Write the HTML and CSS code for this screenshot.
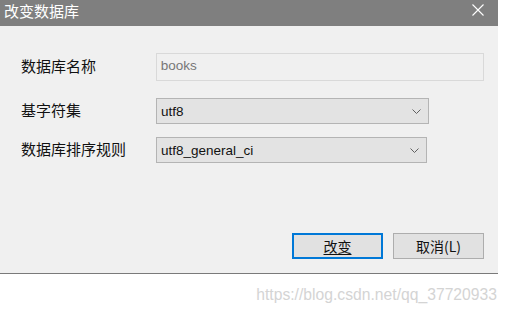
FILE: index.html
```html
<!DOCTYPE html>
<html lang="zh-CN">
<head>
<meta charset="utf-8">
<title>改变数据库</title>
<link rel="stylesheet" href="styles.css">
</head>
<body>
<div class="dialog">
  <div class="titlebar">
    <span class="title">改变数据库</span>
    <svg class="close" width="12" height="12" viewBox="0 0 12 12"><path d="M0.5 0.5 L11.5 11.5 M11.5 0.5 L0.5 11.5" stroke="#ffffff" stroke-width="1.1" fill="none"/></svg>
  </div>
  <div class="content">
    <div class="form">
      <div class="row r1">
        <div class="label">数据库名称</div>
        <div class="input">books</div>
      </div>
      <div class="row r2">
        <div class="label">基字符集</div>
        <div class="select w1"><span>utf8</span><svg class="chev" width="9" height="5" viewBox="0 0 9 5"><path d="M0.5 0.5 L4.5 4.5 L8.5 0.5" stroke="#606060" stroke-width="1" fill="none"/></svg></div>
      </div>
      <div class="row">
        <div class="label">数据库排序规则</div>
        <div class="select w2"><span>utf8_general_ci</span><svg class="chev" width="9" height="5" viewBox="0 0 9 5"><path d="M0.5 0.5 L4.5 4.5 L8.5 0.5" stroke="#606060" stroke-width="1" fill="none"/></svg></div>
      </div>
    </div>
    <div class="buttons">
      <div class="btn primary"><span class="ul">改变</span></div>
      <div class="btn">取消(L)</div>
    </div>
  </div>
</div>
<div class="watermark">https://blog.csdn.net/qq_37720933</div>
</body>
</html>
```
FILE: styles.css
```css
html, body {
  margin: 0;
  padding: 0;
  background: #ffffff;
}
body {
  font-family: "Noto Sans CJK SC", "Liberation Sans", sans-serif;
}
.dialog {
  width: 498px;
  height: 273px;
  background: #f0f0f0;
  border-bottom: 1px solid #7a7a7a;
  display: flex;
  flex-direction: column;
}
.titlebar {
  height: 26px;
  background: #7f7f7f;
  display: flex;
  align-items: center;
  justify-content: space-between;
  padding: 0 14px 0 4px;
  box-sizing: border-box;
}
.title {
  color: #ffffff;
  font-size: 15px;
  line-height: 20px;
  margin-top: -4px;
}
.close {
  margin-top: -6px;
  display: block;
}
.content {
  flex: 1;
  display: flex;
  flex-direction: column;
  padding: 27px 14px 0 21px;
}
.form {
  display: flex;
  flex-direction: column;
}
.row {
  display: flex;
  align-items: center;
}
.row.r1 {
  margin-bottom: 17px;
}
.row.r2 {
  margin-bottom: 13px;
}
.label {
  width: 135px;
  font-size: 15px;
  color: #111111;
  line-height: 20px;
  margin-top: -3px;
}
.input {
  box-sizing: border-box;
  width: 329px;
  height: 28px;
  border: 1px solid #d9d9d9;
  background: #f0f0f0;
  color: #777777;
  font-family: "Liberation Sans", sans-serif;
  font-size: 13.5px;
  padding-left: 4px;
  line-height: 24px;
}
.select {
  box-sizing: border-box;
  height: 26px;
  border: 1px solid #b4b4b4;
  background: #e3e3e3;
  color: #111111;
  font-family: "Liberation Sans", sans-serif;
  font-size: 13.5px;
  padding: 0 7px 0 4px;
  display: flex;
  align-items: center;
  justify-content: space-between;
}
.select.w1 {
  width: 273px;
}
.select.w2 {
  width: 271px;
}
.chev {
  display: block;
}
.buttons {
  display: flex;
  justify-content: flex-end;
  gap: 10px;
  margin-top: 70px;
}
.btn {
  box-sizing: border-box;
  width: 91px;
  height: 26px;
  background: #e1e1e1;
  border: 1px solid #adadad;
  font-size: 14px;
  color: #111111;
  display: flex;
  align-items: center;
  justify-content: center;
  line-height: 18px;
}
.btn.primary {
  border: 2px solid #0078d7;
}
.ul {
  text-decoration: underline;
  text-underline-offset: 2px;
}
.watermark {
  width: 497px;
  text-align: right;
  font-family: "Liberation Sans", sans-serif;
  font-size: 15.7px;
  color: #d4d4d4;
  margin-top: 11px;
  line-height: 20px;
}
```
